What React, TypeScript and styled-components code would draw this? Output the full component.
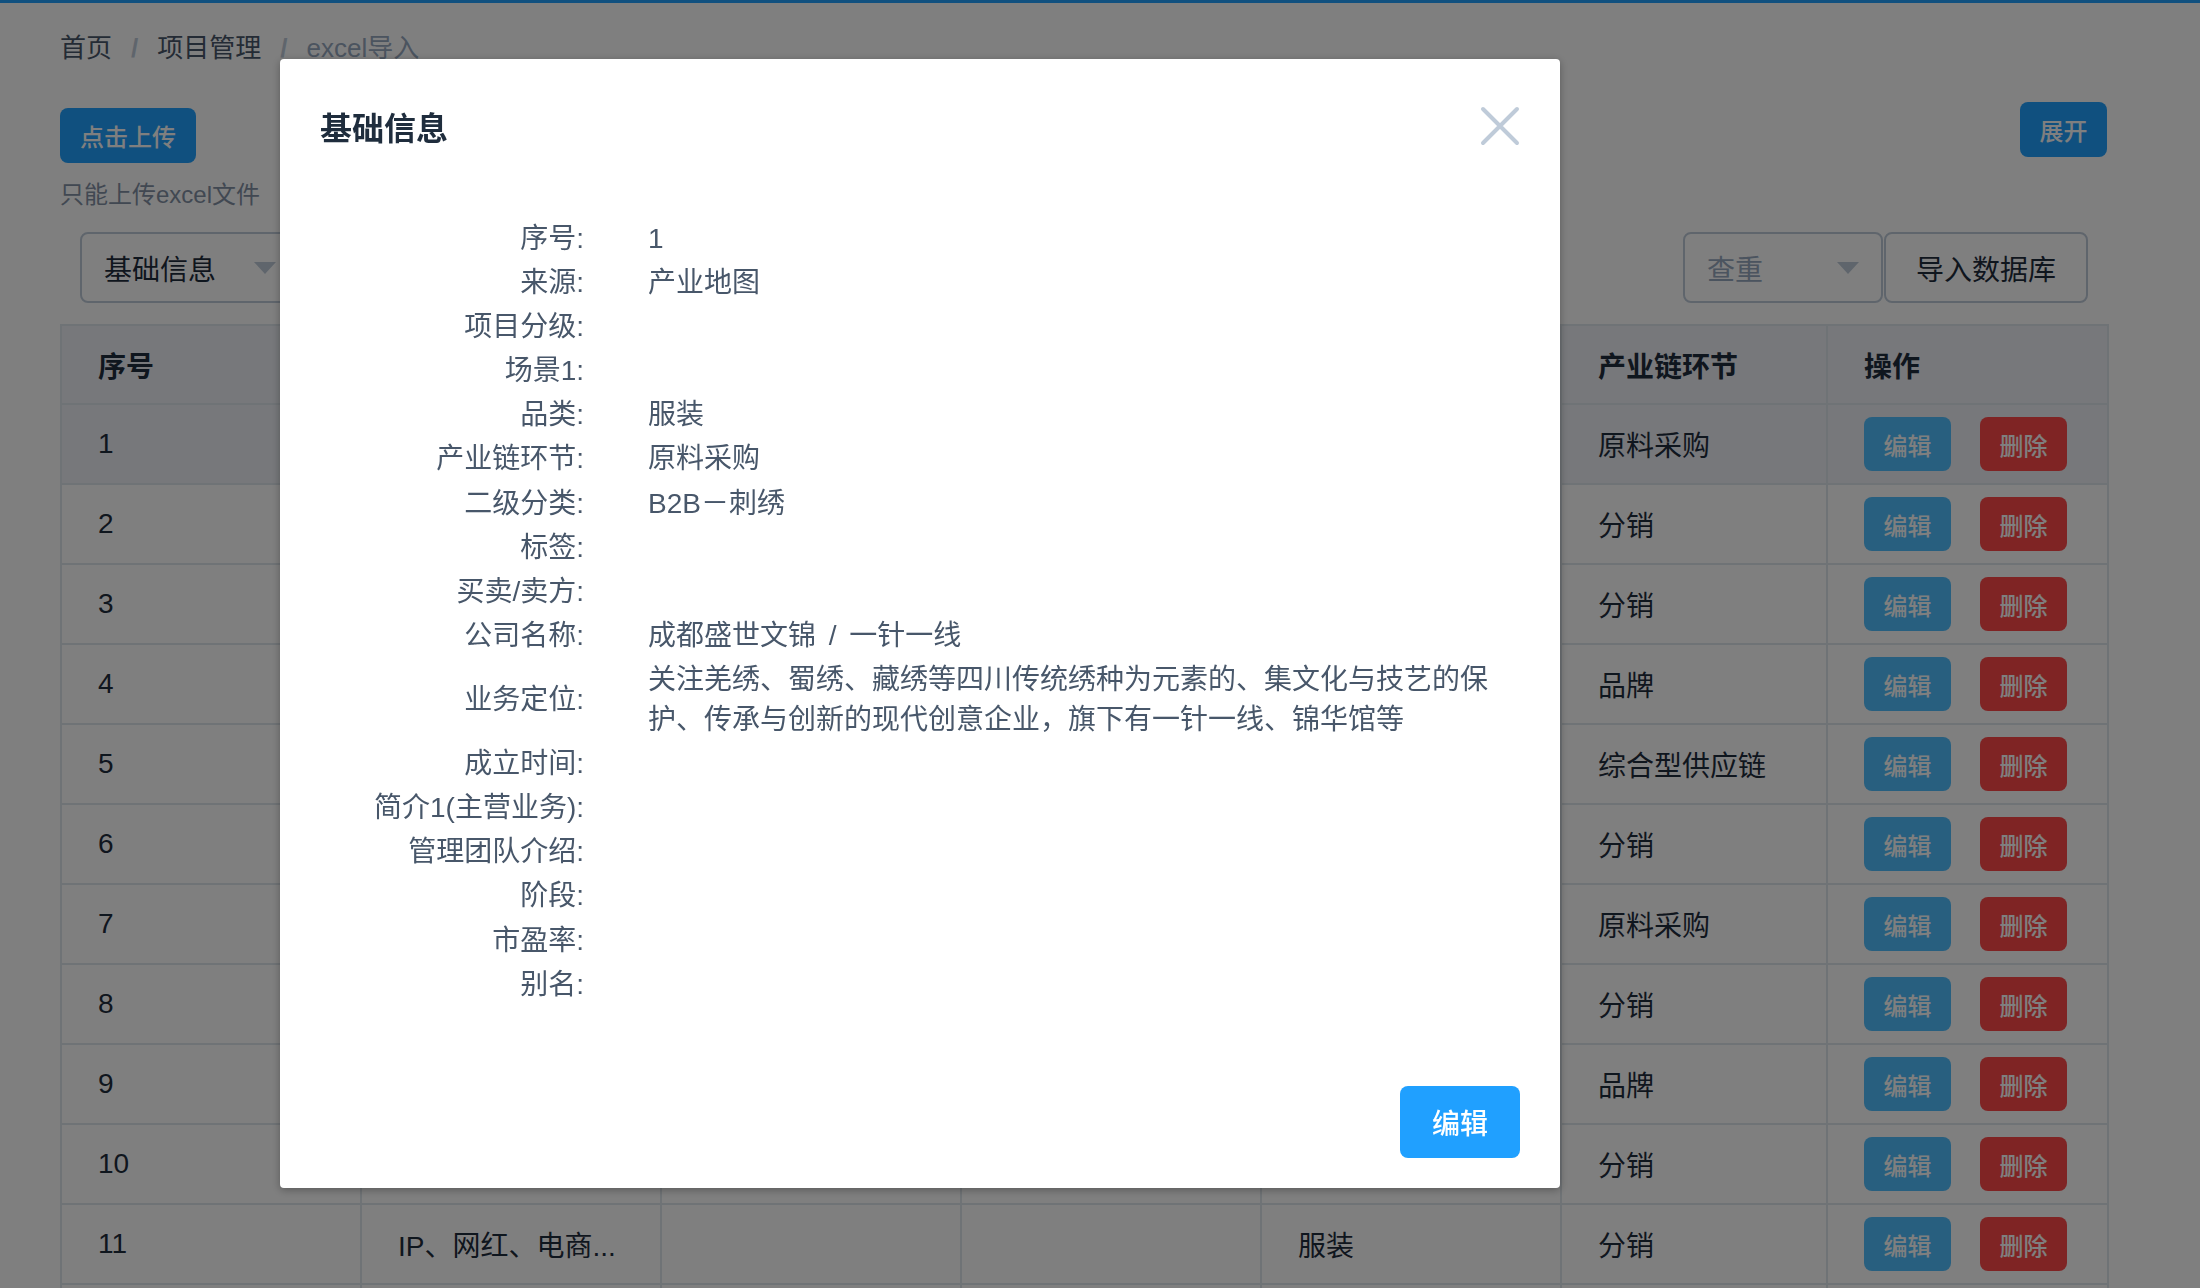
import React from 'react'
import styled, { createGlobalStyle } from 'styled-components'

const GlobalStyle = createGlobalStyle`
  html, body {
    margin: 0;
    padding: 0;
    background: #fff;
    overflow: hidden;
  }
  body {
    font-family: "Liberation Sans", "Noto Sans CJK SC", sans-serif;
    color: #1f2d3d;
  }
  * {
    box-sizing: border-box;
  }
`

const TopLine = styled.div`
  height: 3px;
  background: #20a0ff;
`

const Page = styled.div`
  padding: 32px 93px 0 60px;
`

const Breadcrumb = styled.div`
  display: flex;
  align-items: center;
  height: 26px;
  font-size: 26px;
  line-height: 26px;
`

const Crumb = styled.span<{ $last?: boolean }>`
  color: ${({ $last }) => ($last ? '#97a8be' : '#48576a')};
`

const Separator = styled.span`
  margin: 0 19px;
  color: #bfcbd9;
  font-weight: 700;
`

const TopBar = styled.div`
  display: flex;
  justify-content: space-between;
  align-items: flex-start;
  margin-top: 41px;
`

const UploadBlock = styled.div`
  padding-top: 6px;
`

const PrimaryButton = styled.button<{ $w?: number; $h?: number; $size?: number }>`
  display: inline-flex;
  align-items: center;
  justify-content: center;
  width: ${({ $w }) => ($w ? `${$w}px` : 'auto')};
  height: ${({ $h }) => $h ?? 55}px;
  padding: 0 ${({ $w }) => ($w ? 0 : 20)}px;
  border: none;
  border-radius: 8px;
  background: #20a0ff;
  color: #fff;
  font-family: "Liberation Sans", "Noto Sans CJK SC", sans-serif;
  font-size: ${({ $size }) => $size ?? 24}px;
  font-weight: 500;
  white-space: nowrap;
  cursor: pointer;
`

const Tip = styled.div`
  margin-top: 20px;
  font-size: 24px;
  line-height: 24px;
  color: #8391a5;
`

const FilterRow = styled.div`
  display: flex;
  justify-content: space-between;
  align-items: center;
  margin-top: 25px;
`

const Select = styled.div<{ $w: number; $ml?: number; $placeholder?: boolean }>`
  display: flex;
  align-items: center;
  justify-content: space-between;
  width: ${({ $w }) => $w}px;
  height: 71px;
  margin-left: ${({ $ml }) => $ml ?? 0}px;
  padding: 0 22px;
  border: 2px solid #bfcbd9;
  border-radius: 8px;
  background: #fff;
  font-size: 28px;
  color: ${({ $placeholder }) => ($placeholder ? '#97a8be' : '#1f2d3d')};
`

const Caret = styled.span`
  width: 0;
  height: 0;
  border-left: 11px solid transparent;
  border-right: 11px solid transparent;
  border-top: 12px solid #bfcbd9;
`

const RightGroup = styled.div`
  display: flex;
  gap: 1px;
  margin-right: 19px;
`

const PlainButton = styled.button`
  width: 204px;
  height: 71px;
  border: 2px solid #bfcbd9;
  border-radius: 8px;
  background: #fff;
  color: #1f2d3d;
  font-family: "Liberation Sans", "Noto Sans CJK SC", sans-serif;
  font-size: 28px;
`

const Table = styled.table`
  margin-top: 21px;
  width: 2047px;
  table-layout: fixed;
  border-collapse: collapse;
  border: 2px solid #dfe6ec;
  font-size: 28px;
`

const Th = styled.th`
  height: 79px;
  padding: 0 36px;
  text-align: left;
  background: #eef1f6;
  border: 2px solid #dfe6ec;
  font-weight: 700;
  color: #1f2d3d;
  white-space: nowrap;
  overflow: hidden;
`

const Tr = styled.tr<{ $hover?: boolean }>`
  background: ${({ $hover }) => ($hover ? '#eef1f6' : '#fff')};
`

const Td = styled.td`
  height: 80px;
  padding: 0 36px;
  border: 2px solid #dfe6ec;
  color: #1f2d3d;
  white-space: nowrap;
  overflow: hidden;
`

const Actions = styled.div`
  display: flex;
  gap: 29px;
`

const SmallButton = styled.button<{ $kind: 'info' | 'danger' }>`
  width: 87px;
  height: 54px;
  border: none;
  border-radius: 8px;
  background: ${({ $kind }) => ($kind === 'info' ? '#50bfff' : '#ff4949')};
  color: #fff;
  font-family: "Noto Sans CJK SC", sans-serif;
  font-size: 24px;
  font-weight: 500;
`

const Overlay = styled.div`
  position: fixed;
  inset: 0;
  background: rgba(0, 0, 0, 0.5);
`

const Dialog = styled.div`
  position: absolute;
  left: 280px;
  top: 59px;
  width: 1280px;
  background: #fff;
  border-radius: 4px;
  box-shadow: 0 2px 8px rgba(0, 0, 0, 0.3);
`

const DialogHeader = styled.div`
  display: flex;
  justify-content: space-between;
  align-items: center;
  padding: 43px 40px 0;
`

const DialogTitle = styled.div`
  font-family: "Noto Sans CJK SC", sans-serif;
  font-size: 32px;
  line-height: 48px;
  font-weight: 700;
  color: #1f2d3d;
`

const CloseButton = styled.button`
  display: flex;
  padding: 0;
  border: none;
  background: none;
  cursor: pointer;
`

const DialogBody = styled.div`
  padding: 67px 40px 0;
`

const FieldRow = styled.div`
  display: flex;
  align-items: center;
  padding: 2px 0;
  font-size: 28px;
  line-height: 40.1px;
  color: #48576a;
`

const FieldLabel = styled.div`
  flex: 0 0 264px;
  text-align: right;
  white-space: nowrap;
`

const FieldValue = styled.div`
  width: 852px;
  margin-left: 64px;
  min-height: 40px;
  word-spacing: 5px;
`

const DialogFooter = styled.div`
  display: flex;
  justify-content: flex-end;
  padding: 79px 40px 30px;
`

const columns = ['序号', '来源', '项目分级', '场景1', '品类', '产业链环节', '操作']
const widths = [300, 300, 300, 300, 300, 266, 281]

const rows: string[][] = [
  ['1', '产业地图', '', '', '服装', '原料采购'],
  ['2', '产业地图', '', '', '服装', '分销'],
  ['3', '产业地图', '', '', '服装', '分销'],
  ['4', '产业地图', '', '', '服装', '品牌'],
  ['5', '产业地图', '', '', '服装', '综合型供应链'],
  ['6', '产业地图', '', '', '服装', '分销'],
  ['7', '产业地图', '', '', '服装', '原料采购'],
  ['8', '产业地图', '', '', '服装', '分销'],
  ['9', '产业地图', '', '', '服装', '品牌'],
  ['10', '产业地图', '', '', '服装', '分销'],
  ['11', 'IP、网红、电商...', '', '', '服装', '分销'],
  ['12', '产业地图', '', '', '服装', '分销'],
]

const fields: [string, string][] = [
  ['序号', '1'],
  ['来源', '产业地图'],
  ['项目分级', ''],
  ['场景1', ''],
  ['品类', '服装'],
  ['产业链环节', '原料采购'],
  ['二级分类', 'B2B－刺绣'],
  ['标签', ''],
  ['买卖/卖方', ''],
  ['公司名称', '成都盛世文锦 / 一针一线'],
  [
    '业务定位',
    '关注羌绣、蜀绣、藏绣等四川传统绣种为元素的、集文化与技艺的保护、传承与创新的现代创意企业，旗下有一针一线、锦华馆等',
  ],
  ['成立时间', ''],
  ['简介1(主营业务)', ''],
  ['管理团队介绍', ''],
  ['阶段', ''],
  ['市盈率', ''],
  ['别名', ''],
]

const CloseIcon = () => (
  <svg width="40" height="40" viewBox="0 0 40 40">
    <path d="M3 3 L37 37 M37 3 L3 37" stroke="#bfcbd9" strokeWidth="4" strokeLinecap="round" />
  </svg>
)

const App = () => {
  return (
    <>
      <GlobalStyle />
      <TopLine />
      <Page>
        <Breadcrumb>
          <Crumb>首页</Crumb>
          <Separator>/</Separator>
          <Crumb>项目管理</Crumb>
          <Separator>/</Separator>
          <Crumb $last>excel导入</Crumb>
        </Breadcrumb>

        <TopBar>
          <UploadBlock>
            <PrimaryButton>点击上传</PrimaryButton>
            <Tip>只能上传excel文件</Tip>
          </UploadBlock>
          <PrimaryButton $w={87}>展开</PrimaryButton>
        </TopBar>

        <FilterRow>
          <Select $w={220} $ml={20}>
            基础信息
            <Caret />
          </Select>
          <RightGroup>
            <Select $w={200} $placeholder>
              查重
              <Caret />
            </Select>
            <PlainButton>导入数据库</PlainButton>
          </RightGroup>
        </FilterRow>

        <Table>
          <colgroup>
            {widths.map((w, i) => (
              <col key={i} style={{ width: w }} />
            ))}
          </colgroup>
          <thead>
            <tr>
              {columns.map((c) => (
                <Th key={c}>{c}</Th>
              ))}
            </tr>
          </thead>
          <tbody>
            {rows.map((r, i) => (
              <Tr key={r[0]} $hover={i === 0}>
                {r.map((cell, j) => (
                  <Td key={j}>{cell}</Td>
                ))}
                <Td>
                  <Actions>
                    <SmallButton $kind="info">编辑</SmallButton>
                    <SmallButton $kind="danger">删除</SmallButton>
                  </Actions>
                </Td>
              </Tr>
            ))}
          </tbody>
        </Table>
      </Page>

      <Overlay>
        <Dialog>
          <DialogHeader>
            <DialogTitle>基础信息</DialogTitle>
            <CloseButton aria-label="关闭">
              <CloseIcon />
            </CloseButton>
          </DialogHeader>
          <DialogBody>
            {fields.map(([label, value]) => (
              <FieldRow key={label}>
                <FieldLabel>{label}:</FieldLabel>
                <FieldValue>{value}</FieldValue>
              </FieldRow>
            ))}
          </DialogBody>
          <DialogFooter>
            <PrimaryButton $w={120} $h={72} $size={28}>
              编辑
            </PrimaryButton>
          </DialogFooter>
        </Dialog>
      </Overlay>
    </>
  )
}

export default App
